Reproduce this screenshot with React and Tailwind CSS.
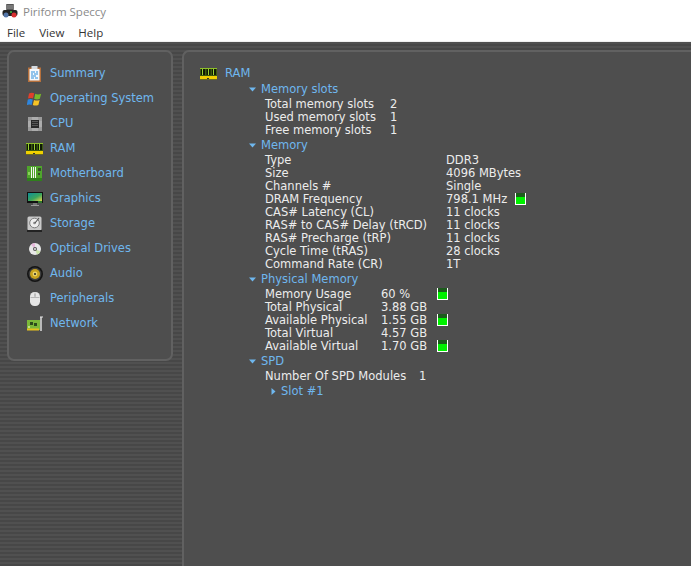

import React from "react";

function Caret({ open }) {
  return open ? (
    <svg width="7" height="5" viewBox="0 0 7 5" className="shrink-0">
      <path d="M0 0.5h7L3.5 4.5z" fill="#6fb7ee" />
    </svg>
  ) : (
    <svg width="5" height="7" viewBox="0 0 5 7" className="shrink-0">
      <path d="M0.5 0v7L4.5 3.5z" fill="#6fb7ee" />
    </svg>
  );
}

function RamIcon({ className = "" }) {
  return (
    <svg width="17" height="12" viewBox="0 0 17 12" className={className}>
      <rect x="0" y="0" width="17" height="8" fill="#3c5a10" />
      <rect x="0" y="0" width="17" height="1" fill="#8fbf2a" />
      <rect x="1" y="1" width="4" height="6" fill="#0e1a04" />
      <rect x="6.5" y="1" width="4" height="6" fill="#0e1a04" />
      <rect x="12" y="1" width="4" height="6" fill="#0e1a04" />
      <rect x="2" y="1" width="1" height="6" fill="#9ad232" />
      <rect x="8" y="1" width="1" height="6" fill="#9ad232" />
      <rect x="13" y="1" width="1" height="6" fill="#9ad232" />
      <rect x="0" y="8" width="17" height="3" fill="#f0d000" />
      <rect x="7" y="10" width="2" height="1" fill="#333" />
      <rect x="0" y="11" width="17" height="1" fill="#6a6a20" />
    </svg>
  );
}

const icons = {
  Summary: (
    <svg width="13" height="16" viewBox="0 0 13 16">
      <rect x="0" y="1.5" width="13" height="14.5" fill="#b5703c" />
      <rect x="1.5" y="3" width="10" height="11.5" fill="#f6f8fb" />
      <rect x="3.5" y="0" width="6" height="3" fill="#d6dbe0" />
      <path d="M3 6h4M8 6h2M3 8h2M6 8h4M3 10h5M3 12h3M7 12h3" stroke="#2f8fdc" strokeWidth="1" />
    </svg>
  ),
  "Operating System": (
    <svg width="16" height="16" viewBox="0 0 16 16">
      <path d="M2 2.5c2-1 3.5-1 5.2-0.2L6 7.4C4.4 6.8 2.8 6.8 1 7.6z" fill="#e0402c" />
      <path d="M8.2 2.8c2 1 3.8 1 6 0l-1.4 5c-2 1-3.8 0.8-5.6 0z" fill="#78b82a" />
      <path d="M0.8 8.6c2-0.8 3.4-0.8 5 0L4.6 14c-1.6-0.8-3-0.8-4.8 0z" fill="#2e86de" />
      <path d="M7 8.9c1.8 0.8 3.6 1 5.6 0l-1.2 5c-2 1-4 0.9-5.6 0z" fill="#f7c325" />
    </svg>
  ),
  CPU: (
    <svg width="14" height="14" viewBox="0 0 14 14">
      <rect width="14" height="14" fill="#cfcfcf" />
      <path d="M0 1h14M0 3h14M0 11h14M0 13h14M1 0v14M3 0v14M11 0v14M13 0v14" stroke="#8a8a8a" strokeWidth="1" />
      <rect x="3" y="3" width="8" height="8" fill="#2a2a2a" />
      <path d="M4 4.5h6M4 6.5h6M4 8.5h6" stroke="#666" strokeWidth="0.8" />
    </svg>
  ),
  RAM: <RamIcon />,
  Motherboard: (
    <svg width="15" height="15" viewBox="0 0 15 15">
      <rect width="15" height="15" fill="#4fa52c" />
      <rect y="12" width="15" height="3" fill="#2f7f1c" />
      <path d="M4.5 1v11M6.5 1v11M8.5 1v11" stroke="#f4f4f4" strokeWidth="1" />
      <rect x="11" y="2" width="3" height="3" fill="#35502a" />
      <rect x="11" y="7" width="2" height="2" fill="#35502a" />
      <rect x="1" y="6" width="2" height="3" fill="#8bd05c" />
    </svg>
  ),
  Graphics: (
    <svg width="16" height="14" viewBox="0 0 16 14">
      <rect width="16" height="11" fill="#111" />
      <defs>
        <linearGradient id="scr" x1="0" y1="0" x2="1" y2="1">
          <stop offset="0" stopColor="#0f8f9a" />
          <stop offset="0.55" stopColor="#3aa55c" />
          <stop offset="1" stopColor="#e8d84c" />
        </linearGradient>
      </defs>
      <rect x="1" y="1" width="14" height="8" fill="url(#scr)" />
      <rect x="11" y="9.5" width="4" height="1" fill="#4be04b" />
      <rect x="6" y="11" width="4" height="2" fill="#777" />
      <rect x="4" y="13" width="8" height="1" fill="#999" />
    </svg>
  ),
  Storage: (
    <svg width="15" height="16" viewBox="0 0 15 16">
      <rect x="0.5" y="0.5" width="14" height="14" rx="1.5" fill="#c9c9c9" />
      <rect x="0" y="14" width="15" height="2" fill="#222" />
      <circle cx="7.5" cy="7" r="4.8" fill="#eeeeee" stroke="#7d7d7d" />
      <circle cx="7.5" cy="7" r="1.3" fill="#888" />
      <path d="M12 2L8 7" stroke="#555" strokeWidth="1.2" />
    </svg>
  ),
  "Optical Drives": (
    <svg width="12" height="12" viewBox="0 0 12 12">
      <circle cx="6" cy="6" r="6" fill="#e8e8e8" />
      <path d="M6 6L2 1.5A6 6 0 0 1 6 0z" fill="#e7b8dc" />
      <path d="M6 6l5.5 2.4A6 6 0 0 1 8 11.6z" fill="#c9e3a8" />
      <circle cx="6" cy="6" r="2" fill="#555" />
      <circle cx="6" cy="6" r="1" fill="#e8e8e8" />
    </svg>
  ),
  Audio: (
    <svg width="16" height="16" viewBox="0 0 16 16">
      <circle cx="8" cy="8" r="8" fill="#141414" />
      <circle cx="8" cy="8" r="6.4" fill="#3d3d3d" />
      <circle cx="8" cy="8" r="5" fill="#c7a11e" />
      <circle cx="8" cy="8" r="2.4" fill="#e9d36a" />
      <circle cx="8" cy="8" r="1" fill="#222" />
    </svg>
  ),
  Peripherals: (
    <svg width="10" height="14" viewBox="0 0 10 14">
      <rect x="0" y="0" width="10" height="14" rx="4.5" fill="#e6e6e6" />
      <path d="M5 0.5V5M0.5 5.5h9" stroke="#a8a8a8" strokeWidth="0.8" />
      <rect x="4" y="2" width="2" height="2.5" fill="#bdbdbd" />
    </svg>
  ),
  Network: (
    <svg width="16" height="16" viewBox="0 0 16 16">
      <rect x="0" y="4" width="13" height="10" fill="#7cb83a" />
      <rect x="3" y="6" width="3" height="3" fill="#2c4a1c" />
      <rect x="7" y="7" width="3" height="3" fill="#2c4a1c" />
      <rect x="1" y="10" width="2" height="2" fill="#bfe08a" />
      <rect x="0" y="12.5" width="12" height="2" fill="#e5c21e" />
      <path d="M14 1v14" stroke="#e8e8e8" strokeWidth="1.4" />
      <path d="M13 1h3" stroke="#e8e8e8" strokeWidth="1" />
    </svg>
  ),
};

const nav = ["Summary","Operating System","CPU","RAM","Motherboard","Graphics","Storage","Optical Drives","Audio","Peripherals","Network"];

function Meter() {
  return (
    <span className="w-[11px] h-[12px] border-x border-b border-white bg-[#00f000] flex flex-col self-center shrink-0 -mt-[1px]">
      <span className="h-[4px] bg-[#1c4c1c] bg-[radial-gradient(#111_40%,#1c5c1c_41%)] bg-[length:2px_2px]" />
    </span>
  );
}

function Row({ k, v, w, vw, meter }) {
  return (
    <div className="flex h-[13px] items-center whitespace-nowrap text-[#ececec]">
      <span style={{ width: w }} className="shrink-0">{k}</span>
      <span style={{ width: vw }} className="shrink-0">{v}</span>
      {meter && <Meter />}
    </div>
  );
}

function Section({ title, children }) {
  return (
    <div className="flex flex-col">
      <div className="flex items-center h-[13px] text-[#6fb7ee] mb-[2px] mt-[1px] pl-[1px]">
        <Caret open />
        <span className="ml-[5px]">{title}</span>
      </div>
      <div className="pl-[17px] mb-[1px]">{children}</div>
    </div>
  );
}

export default function App() {
  return (
    <div className="w-[691px] h-[566px] overflow-hidden flex flex-col font-['DejaVu_Sans',sans-serif] bg-white">
      <div className="h-[24px] flex items-center pl-[2px] font-['Open_Sans',sans-serif] text-[11.5px] text-[#8a8a8a]">
        <svg width="16" height="16" viewBox="0 0 16 16" className="shrink-0 -mt-[2px]">
          <rect x="4" y="1" width="8" height="6" rx="1" fill="#555" />
          <path d="M4 3h8M4 5h8" stroke="#bbb" strokeWidth="0.7" />
          <rect x="0.5" y="7" width="15" height="6" rx="2" fill="#222" />
          <circle cx="4" cy="12" r="2.5" fill="#5577aa" />
          <circle cx="12" cy="12" r="2.5" fill="#d83030" />
          <circle cx="9" cy="9" r="1" fill="#40c040" />
        </svg>
        <span className="ml-[5px]">Piriform Speccy</span>
      </div>
      <div className="h-[17px] flex items-center pl-[7px] gap-[14px] font-['Open_Sans',sans-serif] text-[11.5px] text-[#333]">
        <span>File</span><span>View</span><span>Help</span>
      </div>
      <div className="h-[1px] bg-[#f0f0f0]" />
      <div className="flex-1 min-h-0 flex bg-[#4a4a4a] bg-[repeating-linear-gradient(0deg,#474747_0,#474747_2px,#505050_2px,#505050_4px)] pl-[7px] pt-[8px] text-[11.5px]">
        <aside className="w-[166px] h-[311px] shrink-0 rounded-[7px] bg-[#4e4e4e] border-2 border-[#616161] pt-[9px] pl-[15px] flex flex-col">
          {nav.map((n) => (
            <div key={n} className="h-[25px] flex items-center text-[#6fb7ee] whitespace-nowrap">
              <span className="w-[27px] flex justify-center pr-[4px] -ml-[1px]">{icons[n]}</span>
              <span>{n}</span>
            </div>
          ))}
        </aside>
        <main className="ml-[9px] flex-1 min-w-0 self-stretch rounded-tl-[7px] border-l-2 border-t-2 border-[#616161] bg-[#4e4e4e] pt-[15px] pl-[16px]">
          <div className="flex items-center h-[13px] text-[#6fb7ee] mb-[2px]">
            <RamIcon />
            <span className="ml-[8px]">RAM</span>
          </div>
          <div className="pl-[48px] flex flex-col">
            <Section title="Memory slots">
              <Row k="Total memory slots" v="2" w={125} />
              <Row k="Used memory slots" v="1" w={125} />
              <Row k="Free memory slots" v="1" w={125} />
            </Section>
            <Section title="Memory">
              <Row k="Type" v="DDR3" w={181} />
              <Row k="Size" v="4096 MBytes" w={181} />
              <Row k="Channels #" v="Single" w={181} />
              <Row k="DRAM Frequency" v="798.1 MHz" w={181} vw={69} meter />
              <Row k="CAS# Latency (CL)" v="11 clocks" w={181} />
              <Row k="RAS# to CAS# Delay (tRCD)" v="11 clocks" w={181} />
              <Row k="RAS# Precharge (tRP)" v="11 clocks" w={181} />
              <Row k="Cycle Time (tRAS)" v="28 clocks" w={181} />
              <Row k="Command Rate (CR)" v="1T" w={181} />
            </Section>
            <Section title="Physical Memory">
              <Row k="Memory Usage" v="60 %" w={116} vw={56} meter />
              <Row k="Total Physical" v="3.88 GB" w={116} />
              <Row k="Available Physical" v="1.55 GB" w={116} vw={56} meter />
              <Row k="Total Virtual" v="4.57 GB" w={116} />
              <Row k="Available Virtual" v="1.70 GB" w={116} vw={56} meter />
            </Section>
            <Section title="SPD">
              <Row k="Number Of SPD Modules" v="1" w={154} />
              <div className="flex items-center h-[13px] text-[#6fb7ee] mt-[2px] pl-[6px]">
                <Caret />
                <span className="ml-[5px]">Slot #1</span>
              </div>
            </Section>
          </div>
        </main>
      </div>
    </div>
  );
}
